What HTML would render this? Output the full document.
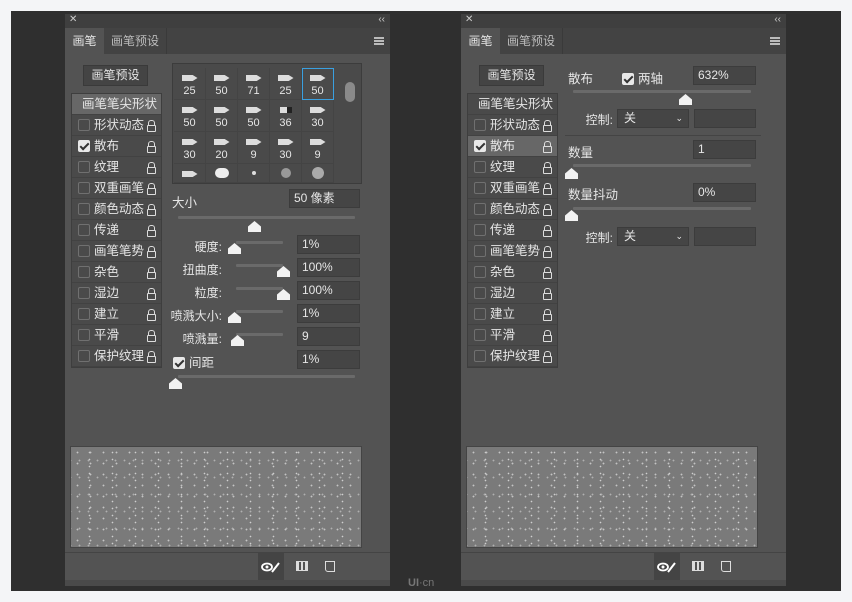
<!DOCTYPE html>
<html><head><meta charset="utf-8"><style>
*{margin:0;padding:0;box-sizing:border-box}
body{width:852px;height:602px;background:#f4f5f7;position:relative;overflow:hidden;font-family:"Liberation Sans","Noto Sans CJK SC",sans-serif;font-size:12px;color:#e6e6e6}
.a{position:absolute}
#bg{left:11px;top:11px;width:830px;height:580px;background:#2f2f2f}
.p{position:absolute;top:14px;width:325px;height:572px;background:#535353}
.bar{left:0;top:0;width:325px;height:14px;background:#3f3f3f;font-size:10px;color:#ccc}
.tabs{left:0;top:14px;width:325px;height:26px;background:#434343}
.tab{top:0;height:26px;line-height:26px;font-size:12px}
.btn{left:18px;top:51px;width:65px;height:21px;background:#444;border:1px solid #3a3a3a;text-align:center;line-height:19px}
.list{left:6px;top:79px;width:91px;height:275px;background:#4a4a4a;border:1px solid #3e3e3e}
.row{position:absolute;left:0;width:89px;height:21px;line-height:21px;border-bottom:1px solid #424242;padding-left:6px;font-size:12.5px}
.cb{display:inline-block;width:12px;height:12px;border:1px solid #707070;border-radius:2px;vertical-align:-2px;margin-right:4px;background:#4a4a4a}
.cbk{background:#e8e8e8;border-color:#e8e8e8;position:relative}
.cbk:after{content:"";position:absolute;left:3px;top:0px;width:3px;height:7px;border:solid #333;border-width:0 2px 2px 0;transform:rotate(45deg)}
.lk{position:absolute;right:5px;top:10px;width:9px;height:7px;border:1.5px solid #ddd;border-radius:1px}
.lk:before{content:"";position:absolute;left:0px;top:-6px;width:5px;height:5px;border:1.5px solid #ddd;border-bottom:none;border-radius:3px 3px 0 0}
.inp{position:absolute;height:19px;background:#454545;border:1px solid #3c3c3c;line-height:17px;padding-left:4px}
.trk{position:absolute;height:3px;background:#6a6a6a;border-radius:1px}
.th{position:absolute;width:13px;height:11px;background:#f2f2f2;clip-path:polygon(50% 0,100% 50%,100% 100%,0 100%,0 50%)}
.lbl{position:absolute;text-align:right}
.prev{left:5px;top:432px;width:292px;height:102px;background:#7a7a7a;border:1px solid #444;
background-image:radial-gradient(circle,#c4c4c4 0.7px,transparent 1.1px),radial-gradient(circle,#b0b0b0 0.7px,transparent 1.1px),radial-gradient(circle,#cfcfcf 0.6px,transparent 1px);
background-size:13px 11px,9px 17px,23px 7px;background-position:0 0,4px 5px,7px 2px}
.foot{left:0;top:538px;width:325px;height:28px;border-top:1px solid #444}
.drag{left:0;top:566px;width:325px;height:6px;background:#4a4a4a}
.grid{left:107px;top:49px;width:190px;height:121px;background:#4a4a4a;border:1px solid #3c3c3c}
.cell{position:absolute;width:32px;height:32px;border-right:1px solid #444;border-bottom:1px solid #444;text-align:center;font-size:11px}
.cell i{display:block;margin:7px auto 4px;width:16px;height:6px;background:#ddd;clip-path:polygon(0 0,70% 0,100% 50%,70% 100%,0 100%)}
.cell span{display:block;line-height:12px}
.sel{outline:1px solid #3aa0e0;outline-offset:-1px}
.sel2{position:absolute;height:19px;background:#454545;border:1px solid #3c3c3c;line-height:17px;padding-left:6px}
</style></head><body>
<div class="a" id="bg"></div>

<!-- LEFT PANEL -->
<div class="p" style="left:65px">
 <div class="a bar"><span class="a" style="left:4px;top:0">✕</span><span class="a" style="right:5px;top:0">‹‹</span></div>
 <div class="a tabs">
  <div class="a tab" style="left:0;width:39px;background:#535353;text-align:center">画笔</div>
  <div class="a tab" style="left:39px;width:63px;text-align:center;color:#bbb;border-right:1px solid #3a3a3a">画笔预设</div>
  <div class="a" style="right:6px;top:9px;width:10px;height:8px;border-top:2px solid #bbb;border-bottom:2px solid #bbb"><div style="margin-top:1px;height:2px;background:#bbb"></div></div>
 </div>
 <div class="a btn">画笔预设</div>
 <div class="a list">
  <div class="row" style="top:0;background:#676767;text-align:right;padding-right:4px">画笔笔尖形状</div>
  <div class="row" style="top:21px"><span class="cb"></span>形状动态<span class="lk"></span></div>
  <div class="row" style="top:42px"><span class="cb cbk"></span>散布<span class="lk"></span></div>
  <div class="row" style="top:63px"><span class="cb"></span>纹理<span class="lk"></span></div>
  <div class="row" style="top:84px"><span class="cb"></span>双重画笔<span class="lk"></span></div>
  <div class="row" style="top:105px"><span class="cb"></span>颜色动态<span class="lk"></span></div>
  <div class="row" style="top:126px"><span class="cb"></span>传递<span class="lk"></span></div>
  <div class="row" style="top:147px"><span class="cb"></span>画笔笔势<span class="lk"></span></div>
  <div class="row" style="top:168px"><span class="cb"></span>杂色<span class="lk"></span></div>
  <div class="row" style="top:189px"><span class="cb"></span>湿边<span class="lk"></span></div>
  <div class="row" style="top:210px"><span class="cb"></span>建立<span class="lk"></span></div>
  <div class="row" style="top:231px"><span class="cb"></span>平滑<span class="lk"></span></div>
  <div class="row" style="top:252px"><span class="cb"></span>保护纹理<span class="lk"></span></div>
 </div>
 <div class="a grid">
  <div class="cell" style="left:1px;top:4px"><i></i><span>25</span></div>
  <div class="cell" style="left:33px;top:4px"><i></i><span>50</span></div>
  <div class="cell" style="left:65px;top:4px"><i></i><span>71</span></div>
  <div class="cell" style="left:97px;top:4px"><i></i><span>25</span></div>
  <div class="cell sel" style="left:129px;top:4px"><i></i><span>50</span></div>
  <div class="cell" style="left:1px;top:36px"><i></i><span>50</span></div>
  <div class="cell" style="left:33px;top:36px"><i></i><span>50</span></div>
  <div class="cell" style="left:65px;top:36px"><i></i><span>50</span></div>
  <div class="cell" style="left:97px;top:36px"><i style="clip-path:none;width:12px;border-right:5px solid #222"></i><span>36</span></div>
  <div class="cell" style="left:129px;top:36px"><i></i><span>30</span></div>
  <div class="cell" style="left:1px;top:68px"><i></i><span>30</span></div>
  <div class="cell" style="left:33px;top:68px"><i></i><span>20</span></div>
  <div class="cell" style="left:65px;top:68px"><i></i><span>9</span></div>
  <div class="cell" style="left:97px;top:68px"><i></i><span>30</span></div>
  <div class="cell" style="left:129px;top:68px"><i></i><span>9</span></div>
  <div class="cell" style="left:1px;top:100px;height:19px"><i></i></div>
  <div class="cell" style="left:33px;top:100px;height:19px"><i style="width:14px;height:10px;border-radius:5px;clip-path:none;background:#eee;margin-top:4px"></i></div>
  <div class="cell" style="left:65px;top:100px;height:19px"><i style="width:4px;height:4px;border-radius:2px;clip-path:none;margin-top:7px"></i></div>
  <div class="cell" style="left:97px;top:100px;height:19px"><i style="width:10px;height:10px;border-radius:5px;clip-path:none;background:#999;margin-top:4px"></i></div>
  <div class="cell" style="left:129px;top:100px;height:19px"><i style="width:12px;height:12px;border-radius:6px;clip-path:none;background:#aaa;margin-top:3px"></i></div>
  <div class="a" style="left:172px;top:18px;width:10px;height:20px;border-radius:5px;background:#8a8a8a"></div>
 </div>
 <div class="a" style="left:107px;top:178px;font-size:12.5px">大小</div>
 <div class="inp" style="left:224px;top:175px;width:71px">50 像素</div>
 <div class="trk" style="left:113px;top:202px;width:177px"></div>
 <div class="th" style="left:183px;top:207px"></div>
 <div class="lbl" style="left:105px;top:224px;width:52px">硬度:</div>
 <div class="lbl" style="left:105px;top:247px;width:52px">扭曲度:</div>
 <div class="lbl" style="left:105px;top:270px;width:52px">粒度:</div>
 <div class="lbl" style="left:99px;top:293px;width:58px">喷溅大小:</div>
 <div class="lbl" style="left:105px;top:316px;width:52px">喷溅量:</div>
 <div class="trk" style="left:171px;top:227px;width:47px"></div>
 <div class="trk" style="left:171px;top:250px;width:47px"></div>
 <div class="trk" style="left:171px;top:273px;width:47px"></div>
 <div class="trk" style="left:171px;top:296px;width:47px"></div>
 <div class="trk" style="left:171px;top:319px;width:47px"></div>
 <div class="th" style="left:163px;top:229px"></div>
 <div class="th" style="left:212px;top:252px"></div>
 <div class="th" style="left:212px;top:275px"></div>
 <div class="th" style="left:163px;top:298px"></div>
 <div class="th" style="left:166px;top:321px"></div>
 <div class="inp" style="left:232px;top:221px;width:63px">1%</div>
 <div class="inp" style="left:232px;top:244px;width:63px">100%</div>
 <div class="inp" style="left:232px;top:267px;width:63px">100%</div>
 <div class="inp" style="left:232px;top:290px;width:63px">1%</div>
 <div class="inp" style="left:232px;top:313px;width:63px">9</div>
 <div class="a" style="left:108px;top:338px;font-size:12.5px"><span class="cb cbk"></span>间距</div>
 <div class="inp" style="left:232px;top:336px;width:63px">1%</div>
 <div class="trk" style="left:113px;top:361px;width:177px"></div>
 <div class="th" style="left:104px;top:364px"></div>
 <div class="a prev"></div>
 <div class="a foot">
  <div class="a" style="left:193px;top:0;width:26px;height:27px;background:#444"></div>
  <svg class="a" style="left:196px;top:7px" width="20" height="14"><ellipse cx="6" cy="7" rx="5" ry="3.5" fill="none" stroke="#fff" stroke-width="1.8"/><circle cx="6" cy="7" r="1.5" fill="#fff"/><path d="M11 12 L18 3" stroke="#fff" stroke-width="2"/></svg>
  <div class="a" style="left:231px;top:8px;width:12px;height:10px;border:1.5px solid #ddd;background:repeating-linear-gradient(90deg,#ddd 0 2px,#535353 2px 4px)"></div>
  <div class="a" style="left:260px;top:8px;width:10px;height:11px;border:1.5px solid #ddd;border-radius:0 0 0 3px"></div>
 </div>
 <div class="a drag"></div>
</div>

<!-- RIGHT PANEL -->
<div class="p" style="left:461px">
 <div class="a bar"><span class="a" style="left:4px;top:0">✕</span><span class="a" style="right:5px;top:0">‹‹</span></div>
 <div class="a tabs">
  <div class="a tab" style="left:0;width:39px;background:#535353;text-align:center">画笔</div>
  <div class="a tab" style="left:39px;width:63px;text-align:center;color:#bbb;border-right:1px solid #3a3a3a">画笔预设</div>
  <div class="a" style="right:6px;top:9px;width:10px;height:8px;border-top:2px solid #bbb;border-bottom:2px solid #bbb"><div style="margin-top:1px;height:2px;background:#bbb"></div></div>
 </div>
 <div class="a btn">画笔预设</div>
 <div class="a list">
  <div class="row" style="top:0;text-align:right;padding-right:4px">画笔笔尖形状</div>
  <div class="row" style="top:21px"><span class="cb"></span>形状动态<span class="lk"></span></div>
  <div class="row" style="top:42px;background:#676767"><span class="cb cbk"></span>散布<span class="lk"></span></div>
  <div class="row" style="top:63px"><span class="cb"></span>纹理<span class="lk"></span></div>
  <div class="row" style="top:84px"><span class="cb"></span>双重画笔<span class="lk"></span></div>
  <div class="row" style="top:105px"><span class="cb"></span>颜色动态<span class="lk"></span></div>
  <div class="row" style="top:126px"><span class="cb"></span>传递<span class="lk"></span></div>
  <div class="row" style="top:147px"><span class="cb"></span>画笔笔势<span class="lk"></span></div>
  <div class="row" style="top:168px"><span class="cb"></span>杂色<span class="lk"></span></div>
  <div class="row" style="top:189px"><span class="cb"></span>湿边<span class="lk"></span></div>
  <div class="row" style="top:210px"><span class="cb"></span>建立<span class="lk"></span></div>
  <div class="row" style="top:231px"><span class="cb"></span>平滑<span class="lk"></span></div>
  <div class="row" style="top:252px"><span class="cb"></span>保护纹理<span class="lk"></span></div>
 </div>
 <div class="a" style="left:107px;top:54px;font-size:12.5px">散布</div>
 <div class="a" style="left:161px;top:54px;font-size:12.5px"><span class="cb cbk"></span>两轴</div>
 <div class="inp" style="left:232px;top:52px;width:63px">632%</div>
 <div class="trk" style="left:112px;top:76px;width:178px"></div>
 <div class="th" style="left:218px;top:80px"></div>
 <div class="lbl" style="left:110px;top:97px;width:42px">控制:</div>
 <div class="sel2" style="left:156px;top:95px;width:72px">关<span style="position:absolute;right:5px;top:0;font-size:9px">⌄</span></div>
 <div class="inp" style="left:233px;top:95px;width:62px"></div>
 <div class="a" style="left:104px;top:121px;width:196px;height:1px;background:#444"></div>
 <div class="a" style="left:107px;top:128px;font-size:12.5px">数量</div>
 <div class="inp" style="left:232px;top:126px;width:63px">1</div>
 <div class="trk" style="left:112px;top:150px;width:178px"></div>
 <div class="th" style="left:104px;top:154px"></div>
 <div class="a" style="left:107px;top:170px;font-size:12.5px">数量抖动</div>
 <div class="inp" style="left:232px;top:169px;width:63px">0%</div>
 <div class="trk" style="left:112px;top:193px;width:178px"></div>
 <div class="th" style="left:104px;top:196px"></div>
 <div class="lbl" style="left:110px;top:215px;width:42px">控制:</div>
 <div class="sel2" style="left:156px;top:213px;width:72px">关<span style="position:absolute;right:5px;top:0;font-size:9px">⌄</span></div>
 <div class="inp" style="left:233px;top:213px;width:62px"></div>
 <div class="a prev"></div>
 <div class="a foot">
  <div class="a" style="left:193px;top:0;width:26px;height:27px;background:#444"></div>
  <svg class="a" style="left:196px;top:7px" width="20" height="14"><ellipse cx="6" cy="7" rx="5" ry="3.5" fill="none" stroke="#fff" stroke-width="1.8"/><circle cx="6" cy="7" r="1.5" fill="#fff"/><path d="M11 12 L18 3" stroke="#fff" stroke-width="2"/></svg>
  <div class="a" style="left:231px;top:8px;width:12px;height:10px;border:1.5px solid #ddd;background:repeating-linear-gradient(90deg,#ddd 0 2px,#535353 2px 4px)"></div>
  <div class="a" style="left:260px;top:8px;width:10px;height:11px;border:1.5px solid #ddd;border-radius:0 0 0 3px"></div>
 </div>
 <div class="a drag"></div>
</div>
<div class="a" style="left:408px;top:577px;color:#777;font-size:11px;font-weight:bold">UI<span style="font-weight:normal">·cn</span></div>
</body></html>
